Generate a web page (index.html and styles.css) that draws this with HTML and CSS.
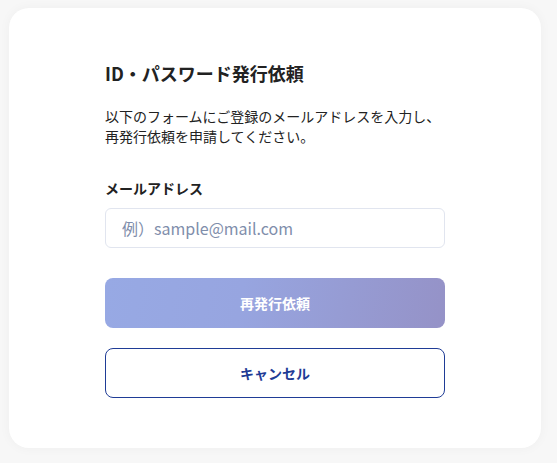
FILE: index.html
```html
<!DOCTYPE html>
<html lang="ja">
<head>
<meta charset="utf-8">
<link rel="stylesheet" href="styles.css">
</head>
<body>
<div class="card">
  <h1 class="title">ID・パスワード発行依頼</h1>
  <p class="desc">以下のフォームにご登録のメールアドレスを入力し、<br>再発行依頼を申請してください。</p>
  <label class="label" for="email">メールアドレス</label>
  <input class="input" id="email" type="text" placeholder="例）sample@mail.com">
  <button class="btn btn-primary" type="button">再発行依頼</button>
  <button class="btn btn-cancel" type="button">キャンセル</button>
</div>
</body>
</html>
```

FILE: styles.css
```css
html, body {
  margin: 0;
  padding: 0;
}
body {
  background: #f7f7f7;
  font-family: "Noto Sans CJK JP", "Noto Sans", sans-serif;
  color: #222;
  padding: 8px 16px 15px 9px;
}
.card {
  background: #fff;
  border-radius: 20px;
  box-shadow: 0 0 12px rgba(0,0,0,0.04);
  padding: 52px 96px 50px;
  display: flex;
  flex-direction: column;
  height: 440px;
  box-sizing: border-box;
}
.title {
  margin: 0;
  font-size: 18px;
  line-height: 26px;
  font-weight: 700;
  color: #222;
}
.desc {
  margin: 20px 0 0;
  font-size: 14px;
  line-height: 20px;
  color: #222;
}
.label {
  margin-top: 32px;
  font-size: 14px;
  line-height: 20px;
  font-weight: 700;
}
.input {
  margin-top: 10px;
  height: 40px;
  box-sizing: border-box;
  border: 1px solid #e1e5ef;
  border-radius: 6px;
  padding: 0 16px;
  font-family: inherit;
  font-size: 16px;
  color: #222;
  outline: none;
}
.input::placeholder {
  color: #7f8eab;
}
.btn {
  height: 50px;
  box-sizing: border-box;
  border-radius: 8px;
  font-family: inherit;
  font-size: 14px;
  font-weight: 700;
  cursor: pointer;
}
.btn-primary {
  margin-top: 30px;
  border: none;
  color: #fff;
  background: linear-gradient(100deg, #97a9e4 0%, #97a5e0 40%, #9592c7 100%);
}
.btn-cancel {
  margin-top: 20px;
  background: #fff;
  border: 1px solid #1f3c96;
  color: #1f3c96;
}
```
